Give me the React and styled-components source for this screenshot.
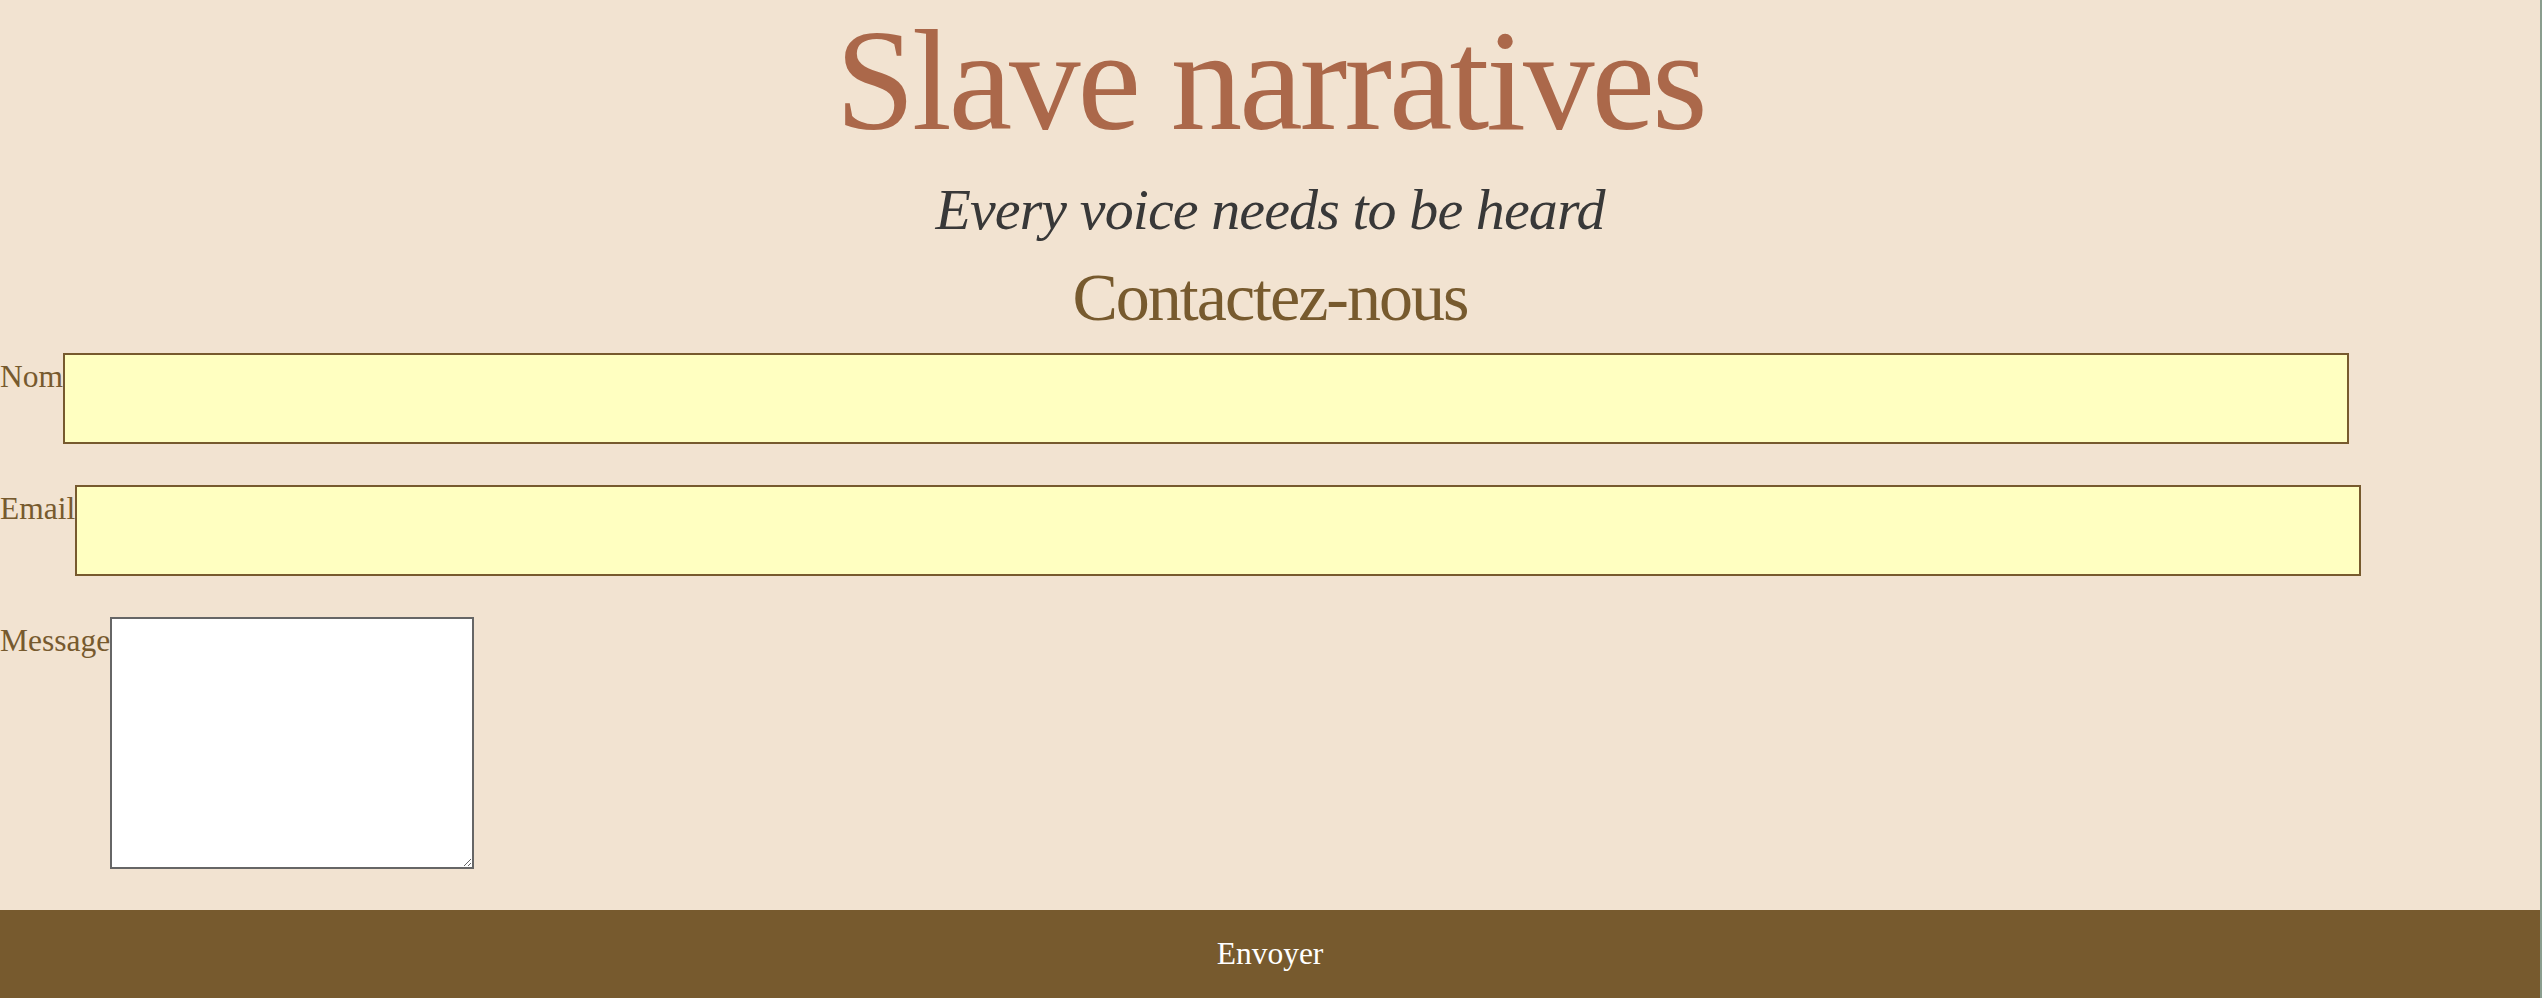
import React from "react";
import styled, { createGlobalStyle } from "styled-components";

const GlobalStyle = createGlobalStyle`
  html, body {
    margin: 0;
    padding: 0;
    background: #f2e3d1;
  }
  * {
    box-sizing: border-box;
  }
`;

const Page = styled.div`
  width: 100%;
  min-height: 998px;
  background: #f2e3d1;
  border-right: 2px solid #8a9d8e;
  font-family: "Liberation Serif", "Times New Roman", serif;
  display: flex;
  flex-direction: column;
`;

const Header = styled.header`
  text-align: center;
  padding-top: 10px;
`;

const Title = styled.h1`
  margin: 0;
  font-size: 143px;
  line-height: 143px;
  font-weight: normal;
  letter-spacing: -3px;
  color: #ab684a;
`;

const Tagline = styled.p`
  margin: 28px 0 0;
  font-size: 58px;
  line-height: 58px;
  font-style: italic;
  letter-spacing: -0.9px;
  color: #383838;
`;

const SectionTitle = styled.h2`
  margin: 24px 0 0;
  font-size: 68px;
  line-height: 68px;
  font-weight: normal;
  letter-spacing: -2px;
  color: #775a2e;
`;

const Form = styled.form`
  margin-top: 22px;
  display: flex;
  flex-direction: column;
  gap: 41px;
`;

const Field = styled.div`
  display: flex;
  align-items: flex-start;
`;

const Label = styled.label`
  font-size: 31.5px;
  line-height: 1;
  margin-top: 8px;
  color: #775a2e;
`;

const TextInput = styled.input`
  width: 90%;
  height: 91px;
  margin: 0;
  background: #ffffc1;
  border: 2px solid #775a2e;
  font-family: inherit;
  font-size: 24px;
  padding: 0 8px;
  outline: none;
`;

const MessageBox = styled.textarea`
  width: 364px;
  height: 252px;
  margin: 0;
  background: #ffffff;
  border: 2px solid #666666;
  font-family: inherit;
  font-size: 20px;
  outline: none;
`;

const SubmitButton = styled.button`
  width: 100%;
  height: 88px;
  border: none;
  background: #775a2e;
  color: #ffffff;
  font-family: "Liberation Serif", "Times New Roman", serif;
  font-size: 31.5px;
  cursor: pointer;
`;

const App = () => {
  return (
    <>
      <GlobalStyle />
      <Page>
        <Header>
          <Title>Slave narratives</Title>
          <Tagline>Every voice needs to be heard</Tagline>
          <SectionTitle>Contactez-nous</SectionTitle>
        </Header>
        <Form onSubmit={(e) => e.preventDefault()}>
          <Field>
            <Label htmlFor="nom">Nom</Label>
            <TextInput id="nom" type="text" />
          </Field>
          <Field>
            <Label htmlFor="email">Email</Label>
            <TextInput id="email" type="email" />
          </Field>
          <Field>
            <Label htmlFor="message">Message</Label>
            <MessageBox id="message" />
          </Field>
          <SubmitButton type="submit">Envoyer</SubmitButton>
        </Form>
      </Page>
    </>
  );
};

export default App;
